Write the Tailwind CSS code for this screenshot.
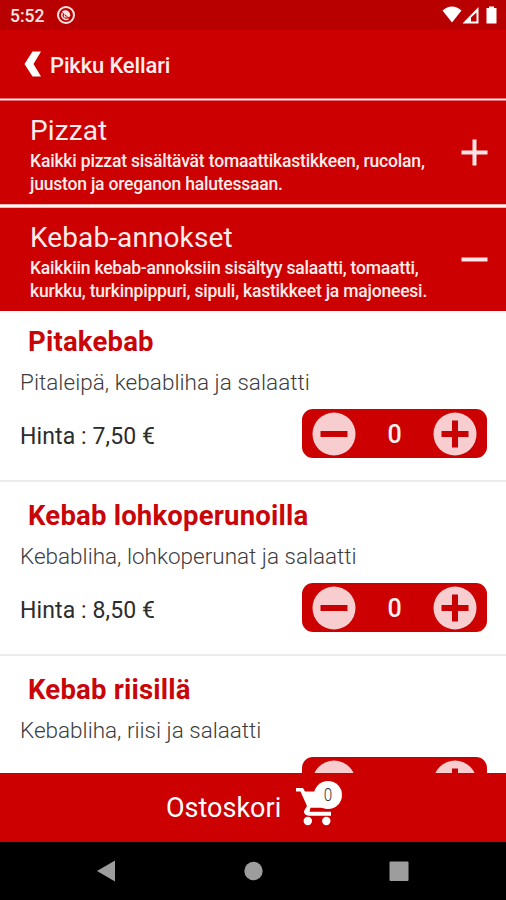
<!DOCTYPE html>
<html lang="fi">
<head>
<meta charset="utf-8">
<title>Pikku Kellari</title>
<script src="https://cdn.jsdelivr.net/npm/@tailwindcss/browser@4"></script>
</head>
<body class="w-[506px] h-[900px] overflow-hidden bg-white font-['Roboto',sans-serif]">
<svg class="hidden">
  <symbol id="stepper-minus" viewBox="0 0 44 44"><circle cx="22" cy="22" r="21.5" fill="#f7cdd0"/><path d="M8.500 22H35.500" stroke="#c80004" stroke-width="6"/></symbol>
  <symbol id="stepper-plus" viewBox="0 0 44 44"><circle cx="22" cy="22" r="21.500" fill="#f7cdd0"/><path d="M8.500 22H35.500M22 8.500V35.500" stroke="#c80004" stroke-width="6"/></symbol>
</svg>
<div class="flex h-full flex-col">
  <div class="flex h-[30px] shrink-0 items-center bg-[#b80000] pl-[10px] pr-[8px] text-white">
    <span class="w-[46px] text-[17.5px] font-medium leading-[30px] text-[#ffe4e4] pt-[2px]">5:52</span>
    <svg class="h-[20px] w-[20px]" viewBox="0 0 20 20" fill="none" stroke="#ffe4e4"><circle cx="10" cy="10" r="8" stroke-width="2"/><path d="M6.200 8A4.500 4.500 0 0 0 12.500 13.800" stroke-width="1.500"/><path d="M6 6.500C9 4 14 5.500 14.300 10.500L13 12.500L6.500 7.500Z" fill="#ffe4e4" stroke="none"/><path d="M8.500 9.500V12H11.500" stroke-width="1.200"/></svg>
    <svg class="ml-auto h-[30px] w-[56px]" viewBox="0 0 56 30" fill="#fff"><path d="M.5 10.500Q10 2.500 19.500 10.500L10 22.500Z"/><path fill-rule="evenodd" d="M20.500 23.500L36.500 7V23.500ZM29 21.500H34.500V12.500L29 17.500Z"/><path d="M47 6.500H52V8H54.500V23.500H44.500V8H47Z"/></svg>
  </div>
  <header class="flex h-[68px] shrink-0 items-center bg-[#cc0000] pl-[24px] text-white">
    <svg class="h-[28px] w-[18px]" viewBox="0 0 18 28" fill="#fff"><path d="M8.500 1.500H17L9.500 14L17 26.500H8.500L.5 14Z"/></svg>
    <h1 class="ml-[8px] mt-[3px] whitespace-nowrap text-[22px] font-medium tracking-[-0.15px] text-[#ffeded]">Pikku Kellari</h1>
  </header>
  <div class="h-[3px] shrink-0 border-y border-[#e37070] bg-[#ffe9e9]"></div>
  <section class="flex h-[103px] shrink-0 items-center bg-[#cc0000] pl-[30px] pr-[18px] text-[#ffecec]">
    <div class="flex-1 pt-[4px]">
      <h2 class="whitespace-nowrap text-[28px] leading-[34px] mb-[2px] tracking-[0.1px]">Pizzat</h2>
      <p class="whitespace-nowrap text-[17.5px] font-medium leading-[22.500px] tracking-[-0.2px]"><span class="tracking-[-0.18px]">Kaikki pizzat sisältävät tomaattikastikkeen, rucolan,</span><br>juuston ja oreganon halutessaan.</p>
    </div>
    <svg class="h-[28px] w-[27px]" viewBox="0 0 27 28" stroke="#ffe5e5" stroke-width="4"><path d="M.5 13.500H26.500M13.500 .5V26.500"/></svg>
  </section>
  <div class="h-[4px] shrink-0 border-y border-[#f2b4b4] bg-[#fff5f5]"></div>
  <section class="flex h-[103px] shrink-0 items-center bg-[#cc0000] pl-[30px] pr-[18px] text-[#ffecec]">
    <div class="flex-1 pt-[4px]">
      <h2 class="whitespace-nowrap text-[28px] leading-[34px] mb-[2px] tracking-[0.1px]">Kebab-annokset</h2>
      <p class="whitespace-nowrap text-[17.5px] font-medium leading-[22.500px] tracking-[-0.2px]">Kaikkiin kebab-annoksiin sisältyy salaatti, tomaatti,<br>kurkku, turkinpippuri, sipuli, kastikkeet ja majoneesi.</p>
    </div>
    <svg class="h-[28px] w-[27px]" viewBox="0 0 27 28" stroke="#ffe5e5" stroke-width="4"><path d="M.5 13.500H26.500"/></svg>
  </section>
  <main class="min-h-0 flex-1 overflow-hidden bg-white">
    <article class="h-[171px] border-b-2 border-[#ececec] pt-[14px]">
      <h3 class="pl-[28px] whitespace-nowrap text-[27.5px] font-bold tracking-[0.2px] leading-[34px] text-[#c90508]">Pitakebab</h3>
      <p class="mt-[8px] pl-[20px] whitespace-nowrap text-[22.5px] font-light leading-[30px] tracking-[0.04px] text-[#3c3c3c]">Pitaleipä, kebabliha ja salaatti</p>
      <div class="mt-[12px] flex items-center pl-[20px] pr-[19px]">
        <span class="whitespace-nowrap pt-[6px] text-[23px] leading-[34px] tracking-[0.1px] text-[#2c2c2c]">Hinta : 7,50 €</span>
        <div class="ml-auto flex h-[49px] w-[185px] items-center justify-between rounded-[11px] bg-[#cc0000] px-[10px]">
          <svg class="h-[44px] w-[44px]"><use href="#stepper-minus"/></svg><span class="pt-[2px] text-[25px] font-medium text-[#fff0f0]">0</span><svg class="h-[44px] w-[44px]"><use href="#stepper-plus"/></svg>
        </div>
      </div>
    </article>
    <article class="h-[174px] border-b-2 border-[#ececec] pt-[17px]">
      <h3 class="pl-[28px] whitespace-nowrap text-[27.5px] font-bold tracking-[0.2px] leading-[34px] text-[#c90508]">Kebab lohkoperunoilla</h3>
      <p class="mt-[8px] pl-[20px] whitespace-nowrap text-[22.5px] font-light leading-[30px] text-[#3c3c3c]">Kebabliha, lohkoperunat ja salaatti</p>
      <div class="mt-[12px] flex items-center pl-[20px] pr-[19px]">
        <span class="whitespace-nowrap pt-[6px] text-[23px] leading-[34px] tracking-[0.1px] text-[#2c2c2c]">Hinta : 8,50 €</span>
        <div class="ml-auto flex h-[49px] w-[185px] items-center justify-between rounded-[11px] bg-[#cc0000] px-[10px]">
          <svg class="h-[44px] w-[44px]"><use href="#stepper-minus"/></svg><span class="pt-[2px] text-[25px] font-medium text-[#fff0f0]">0</span><svg class="h-[44px] w-[44px]"><use href="#stepper-plus"/></svg>
        </div>
      </div>
    </article>
    <article class="h-[174px] pt-[17px]">
      <h3 class="pl-[28px] whitespace-nowrap text-[27.5px] font-bold tracking-[0.2px] leading-[34px] text-[#c90508]">Kebab riisillä</h3>
      <p class="mt-[8px] pl-[20px] whitespace-nowrap text-[22.5px] font-light leading-[30px] text-[#3c3c3c]">Kebabliha, riisi ja salaatti</p>
      <div class="mt-[12px] flex items-center justify-end pr-[19px]">
        <div class="flex h-[49px] w-[185px] items-center justify-between rounded-[11px] bg-[#cc0000] px-[10px]">
          <svg class="h-[44px] w-[44px]"><use href="#stepper-minus"/></svg><svg class="h-[44px] w-[44px]"><use href="#stepper-plus"/></svg>
        </div>
      </div>
    </article>
  </main>
  <footer class="flex h-[69px] shrink-0 items-center bg-[#cc0000] pl-[166px] text-white">
    <span class="w-[129px] whitespace-nowrap pt-[2px] text-[27px]">Ostoskori</span>
    <div class="relative h-[69px] w-[48px]">
      <svg class="h-[69px] w-[48px]" viewBox="0 0 48 69" fill="#fff"><path d="M1 15H8L10 18.500H36V34.800H15.500L14.500 38.700H36V42.700H14Q8.500 42 9 38L12 33L5.500 18.500H1Z"/><circle cx="12.800" cy="48" r="4.200"/><circle cx="31.300" cy="48" r="4.200"/></svg>
      <span class="absolute left-[19px] top-[8px] flex h-[28px] w-[28px] items-center justify-center rounded-full bg-white text-[18px] font-light text-[#333]"><span class="-mt-px scale-x-[.85]">0</span></span>
    </div>
  </footer>
  <nav class="h-[58px] shrink-0 bg-black">
    <svg class="h-[58px] w-[506px]" viewBox="0 0 506 58" fill="#9d9d9d"><path d="M97 29L115 18.500V39.500Z"/><circle cx="253.500" cy="29" r="9.200"/><rect x="389.500" y="19.500" width="19" height="19.500" rx="1"/></svg>
  </nav>
</div>
</body>
</html>
